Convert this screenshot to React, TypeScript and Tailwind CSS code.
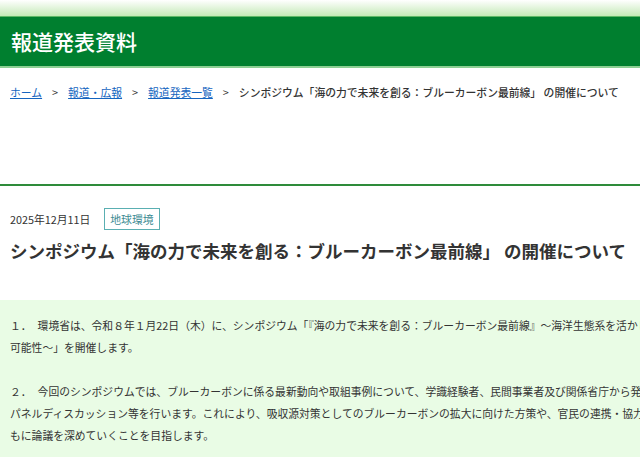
import React from "react";

const font = { fontFamily: '"Noto Sans CJK JP", "Noto Sans", sans-serif' };

export default function App() {
  return (
    <div className="w-[640px] h-[472px] overflow-hidden bg-white text-[#333]" style={font}>
      {/* header */}
      <div className="h-[16px] bg-gradient-to-b from-white to-[#c4e9b6]" />
      <div className="h-[52px] bg-[#007f2f] border-t border-[#5fb867] border-b-[2px] border-b-[#8ccf93] flex items-center px-[11px]">
        <h1 className="text-[21px] leading-none text-white font-medium">報道発表資料</h1>
      </div>

      {/* breadcrumb */}
      <nav className="mt-[16px] px-[10px] text-[10.8px] leading-[16px] whitespace-nowrap flex items-center">
        <a className="text-[#1565c0] underline">ホーム</a>
        <span className="mx-[10px] text-[#333]">&gt;</span>
        <a className="text-[#1565c0] underline">報道・広報</a>
        <span className="mx-[10px] text-[#333]">&gt;</span>
        <a className="text-[#1565c0] underline">報道発表一覧</a>
        <span className="mx-[10px] text-[#333]">&gt;</span>
        <span className="font-medium">シンポジウム「海の力で未来を創る：ブルーカーボン最前線」 の開催について</span>
      </nav>

      {/* divider */}
      <div className="mt-[84px] h-[2px] bg-[#2e8b3a]" />

      {/* meta */}
      <div className="mt-[22px] px-[10px] flex items-center gap-[14px]">
        <span className="text-[10.8px] leading-[16px]">2025年12月11日</span>
        <span className="border border-[#5aafb2] text-[#3b8a92] text-[10.8px] leading-[16px] px-[5px] py-[2px]">地球環境</span>
      </div>

      {/* title */}
      <h2 className="mt-[9px] px-[10px] text-[17.5px] leading-[24px] font-semibold whitespace-nowrap">
        シンポジウム「海の力で未来を創る：ブルーカーボン最前線」 の開催について
      </h2>

      {/* body box */}
      <div className="mt-[37px] bg-[#e9fce5] pt-[14px] pb-[11px] px-[10px] text-[10.8px] leading-[22px] whitespace-nowrap overflow-hidden">
        <p>
          <span>１．</span>
          <span className="ml-[6px]">環境省は、令和８年１月22日（木）に、シンポジウム「『海の力で未来を創る：ブルーカーボン最前線』～海洋生態系を活かした</span>
        </p>
        <p>可能性～」を開催します。</p>
        <p className="h-[22px]" />
        <p>
          <span>２．</span>
          <span className="ml-[6px]">今回のシンポジウムでは、ブルーカーボンに係る最新動向や取組事例について、学識経験者、民間事業者及び関係省庁から発表</span>
        </p>
        <p>パネルディスカッション等を行います。これにより、吸収源対策としてのブルーカーボンの拡大に向けた方策や、官民の連携・協力の在り方</p>
        <p>もに論議を深めていくことを目指します。</p>
      </div>
    </div>
  );
}
